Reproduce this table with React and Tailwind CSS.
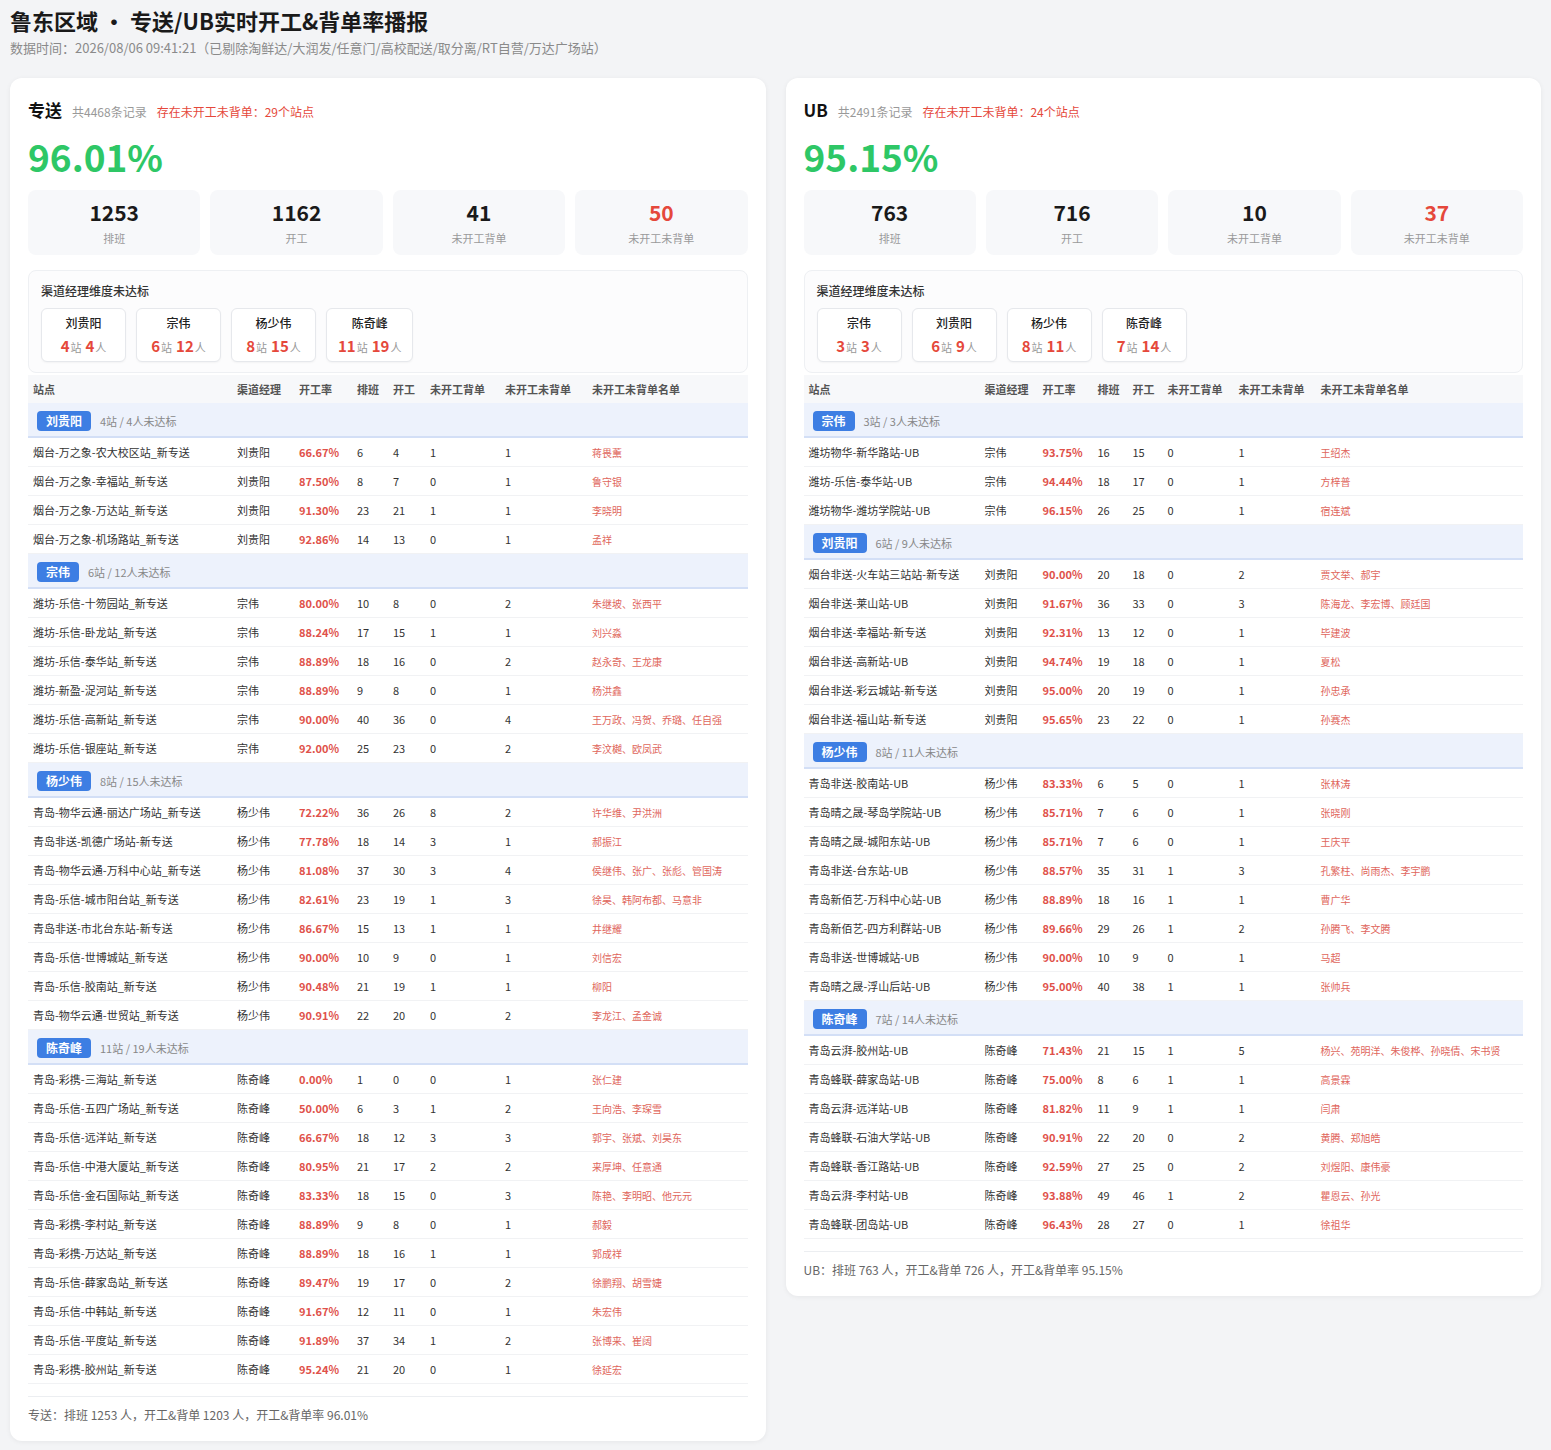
import React from 'react';

const FONT = { fontFamily: '"Noto Sans CJK SC", "Noto Sans", sans-serif' };

const zhuansong = {
  title: '专送',
  records: '共4468条记录',
  warn: '存在未开工未背单：29个站点',
  rate: '96.01%',
  stats: [
    ['1253', '排班'],
    ['1162', '开工'],
    ['41', '未开工背单'],
    ['50', '未开工未背单'],
  ],
  managers: [
    ['刘贵阳', 4, 4],
    ['宗伟', 6, 12],
    ['杨少伟', 8, 15],
    ['陈奇峰', 11, 19],
  ],
  cols: ['w-[204px]', 'w-[62px]', 'w-[58px]', 'w-[36px]', 'w-[37px]', 'w-[75px]', 'w-[87px]'],
  groups: [
    {
      name: '刘贵阳',
      note: '4站 / 4人未达标',
      rows: [
        ['烟台-万之象-农大校区站_新专送', '66.67%', 6, 4, 1, 1, '蒋畏薰'],
        ['烟台-万之象-幸福站_新专送', '87.50%', 8, 7, 0, 1, '鲁守银'],
        ['烟台-万之象-万达站_新专送', '91.30%', 23, 21, 1, 1, '李晓明'],
        ['烟台-万之象-机场路站_新专送', '92.86%', 14, 13, 0, 1, '孟祥'],
      ],
    },
    {
      name: '宗伟',
      note: '6站 / 12人未达标',
      rows: [
        ['潍坊-乐信-十笏园站_新专送', '80.00%', 10, 8, 0, 2, '朱继坡、张西平'],
        ['潍坊-乐信-卧龙站_新专送', '88.24%', 17, 15, 1, 1, '刘兴淼'],
        ['潍坊-乐信-泰华站_新专送', '88.89%', 18, 16, 0, 2, '赵永奇、王龙康'],
        ['潍坊-新盈-浞河站_新专送', '88.89%', 9, 8, 0, 1, '杨洪鑫'],
        ['潍坊-乐信-高新站_新专送', '90.00%', 40, 36, 0, 4, '王万政、冯贺、乔璐、任自强'],
        ['潍坊-乐信-银座站_新专送', '92.00%', 25, 23, 0, 2, '李汶樾、欧凤武'],
      ],
    },
    {
      name: '杨少伟',
      note: '8站 / 15人未达标',
      rows: [
        ['青岛-物华云通-丽达广场站_新专送', '72.22%', 36, 26, 8, 2, '许华维、尹洪洲'],
        ['青岛非送-凯德广场站-新专送', '77.78%', 18, 14, 3, 1, '郝振江'],
        ['青岛-物华云通-万科中心站_新专送', '81.08%', 37, 30, 3, 4, '侯继伟、张广、张彪、管国涛'],
        ['青岛-乐信-城市阳台站_新专送', '82.61%', 23, 19, 1, 3, '徐昊、韩阿布都、马意非'],
        ['青岛非送-市北台东站-新专送', '86.67%', 15, 13, 1, 1, '井继耀'],
        ['青岛-乐信-世博城站_新专送', '90.00%', 10, 9, 0, 1, '刘信宏'],
        ['青岛-乐信-胶南站_新专送', '90.48%', 21, 19, 1, 1, '柳阳'],
        ['青岛-物华云通-世贸站_新专送', '90.91%', 22, 20, 0, 2, '李龙江、孟金诚'],
      ],
    },
    {
      name: '陈奇峰',
      note: '11站 / 19人未达标',
      rows: [
        ['青岛-彩携-三海站_新专送', '0.00%', 1, 0, 0, 1, '张仁建'],
        ['青岛-乐信-五四广场站_新专送', '50.00%', 6, 3, 1, 2, '王向浩、李琛雪'],
        ['青岛-乐信-远洋站_新专送', '66.67%', 18, 12, 3, 3, '郭宇、张斌、刘昊东'],
        ['青岛-乐信-中港大厦站_新专送', '80.95%', 21, 17, 2, 2, '来厚坤、任意通'],
        ['青岛-乐信-金石国际站_新专送', '83.33%', 18, 15, 0, 3, '陈艳、李明昭、他元元'],
        ['青岛-彩携-李村站_新专送', '88.89%', 9, 8, 0, 1, '郝毅'],
        ['青岛-彩携-万达站_新专送', '88.89%', 18, 16, 1, 1, '郭成祥'],
        ['青岛-乐信-薛家岛站_新专送', '89.47%', 19, 17, 0, 2, '徐鹏翔、胡雪婕'],
        ['青岛-乐信-中韩站_新专送', '91.67%', 12, 11, 0, 1, '朱宏伟'],
        ['青岛-乐信-平度站_新专送', '91.89%', 37, 34, 1, 2, '张博来、崔阔'],
        ['青岛-彩携-胶州站_新专送', '95.24%', 21, 20, 0, 1, '徐延宏'],
      ],
    },
  ],
  footer: '专送：排班 1253 人，开工&背单 1203 人，开工&背单率 96.01%',
};

const ub = {
  title: 'UB',
  records: '共2491条记录',
  warn: '存在未开工未背单：24个站点',
  rate: '95.15%',
  stats: [
    ['763', '排班'],
    ['716', '开工'],
    ['10', '未开工背单'],
    ['37', '未开工未背单'],
  ],
  managers: [
    ['宗伟', 3, 3],
    ['刘贵阳', 6, 9],
    ['杨少伟', 8, 11],
    ['陈奇峰', 7, 14],
  ],
  cols: ['w-[176px]', 'w-[58px]', 'w-[55px]', 'w-[35px]', 'w-[35px]', 'w-[71px]', 'w-[82px]'],
  groups: [
    {
      name: '宗伟',
      note: '3站 / 3人未达标',
      rows: [
        ['潍坊物华-新华路站-UB', '93.75%', 16, 15, 0, 1, '王绍杰'],
        ['潍坊-乐信-泰华站-UB', '94.44%', 18, 17, 0, 1, '方梓普'],
        ['潍坊物华-潍坊学院站-UB', '96.15%', 26, 25, 0, 1, '宿连斌'],
      ],
    },
    {
      name: '刘贵阳',
      note: '6站 / 9人未达标',
      rows: [
        ['烟台非送-火车站三站站-新专送', '90.00%', 20, 18, 0, 2, '贾文举、郝宇'],
        ['烟台非送-莱山站-UB', '91.67%', 36, 33, 0, 3, '陈海龙、李宏博、顾廷国'],
        ['烟台非送-幸福站-新专送', '92.31%', 13, 12, 0, 1, '毕建波'],
        ['烟台非送-高新站-UB', '94.74%', 19, 18, 0, 1, '夏松'],
        ['烟台非送-彩云城站-新专送', '95.00%', 20, 19, 0, 1, '孙忠承'],
        ['烟台非送-福山站-新专送', '95.65%', 23, 22, 0, 1, '孙赛杰'],
      ],
    },
    {
      name: '杨少伟',
      note: '8站 / 11人未达标',
      rows: [
        ['青岛非送-胶南站-UB', '83.33%', 6, 5, 0, 1, '张林涛'],
        ['青岛晴之晟-琴岛学院站-UB', '85.71%', 7, 6, 0, 1, '张晓刚'],
        ['青岛晴之晟-城阳东站-UB', '85.71%', 7, 6, 0, 1, '王庆平'],
        ['青岛非送-台东站-UB', '88.57%', 35, 31, 1, 3, '孔繁柱、尚雨杰、李宇鹏'],
        ['青岛新佰艺-万科中心站-UB', '88.89%', 18, 16, 1, 1, '曹广华'],
        ['青岛新佰艺-四方利群站-UB', '89.66%', 29, 26, 1, 2, '孙腾飞、李文腾'],
        ['青岛非送-世博城站-UB', '90.00%', 10, 9, 0, 1, '马超'],
        ['青岛晴之晟-浮山后站-UB', '95.00%', 40, 38, 1, 1, '张帅兵'],
      ],
    },
    {
      name: '陈奇峰',
      note: '7站 / 14人未达标',
      rows: [
        ['青岛云湃-胶州站-UB', '71.43%', 21, 15, 1, 5, '杨兴、苑明洋、朱俊桦、孙晓倩、宋书贤'],
        ['青岛蜂联-薛家岛站-UB', '75.00%', 8, 6, 1, 1, '高景霖'],
        ['青岛云湃-远洋站-UB', '81.82%', 11, 9, 1, 1, '闫肃'],
        ['青岛蜂联-石油大学站-UB', '90.91%', 22, 20, 0, 2, '黄腾、郑旭皓'],
        ['青岛蜂联-香江路站-UB', '92.59%', 27, 25, 0, 2, '刘煜阳、康伟豪'],
        ['青岛云湃-李村站-UB', '93.88%', 49, 46, 1, 2, '瞿恩云、孙光'],
        ['青岛蜂联-团岛站-UB', '96.43%', 28, 27, 0, 1, '徐祖华'],
      ],
    },
  ],
  footer: 'UB：排班 763 人，开工&背单 726 人，开工&背单率 95.15%',
};

const HEADERS = ['站点', '渠道经理', '开工率', '排班', '开工', '未开工背单', '未开工未背单', '未开工未背单名单'];

function StatBox({ value, label, danger }) {
  return (
    <div className="flex-1 h-[65px] rounded-lg bg-[#f7f8fa] flex flex-col items-center justify-center">
      <div className={`text-[21px] leading-[26px] font-bold ${danger ? 'text-[#e5483b]' : 'text-[#1a1a1a]'}`}>{value}</div>
      <div className="text-[11px] leading-[16px] mt-[5px] text-[#9a9a9a]">{label}</div>
    </div>
  );
}

function ManagerChip({ name, stations, people }) {
  return (
    <div className="min-w-[85px] h-[54px] px-[11px] rounded-md border border-[#e6e8ec] bg-white shadow-[0_1px_2px_rgba(0,0,0,0.04)] flex flex-col items-center justify-center">
      <div className="text-[12px] leading-[16px] font-medium text-[#222]">{name}</div>
      <div className="mt-[5px] leading-[18px] whitespace-nowrap">
        <span className="text-[15px] font-bold text-[#e5483b]">{stations}</span>
        <span className="text-[11px] text-[#999] ml-[1px]">站</span>
        <span className="text-[15px] font-bold text-[#e5483b] ml-[4px]">{people}</span>
        <span className="text-[11px] text-[#999] ml-[1px]">人</span>
      </div>
    </div>
  );
}

// every data cell carries the row divider (separate border model)
const cell = 'h-[29px] px-[5px] border-b border-[#f1f2f4]';

function Panel({ data }) {
  return (
    <div className="bg-white rounded-xl shadow-[0_1px_5px_rgba(0,0,0,0.06)] px-[18px] pt-[18px] pb-[18px]">
      {/* heading */}
      <div className="flex items-baseline h-[28px] leading-[28px]">
        <span className="text-[17px] font-bold text-[#111]">{data.title}</span>
        <span className="ml-[10px] text-[12px] text-[#999]">{data.records}</span>
        <span className="ml-[10px] text-[12px] text-[#e5483b]">{data.warn}</span>
      </div>
      <div className="mt-[12px] text-[37px] leading-[40px] font-bold text-[#2ec766]">{data.rate}</div>

      {/* stats */}
      <div className="mt-[14px] flex gap-[10px]">
        {data.stats.map(([v, l], i) => (
          <StatBox key={l} value={v} label={l} danger={i === 3} />
        ))}
      </div>

      {/* manager summary */}
      <div className="mt-[15px] rounded-lg border border-[#eef0f3] bg-[#fcfcfd] px-3 pt-[12px] pb-[10px]">
        <div className="text-[12px] leading-[16px] font-medium text-[#333]">渠道经理维度未达标</div>
        <div className="mt-[9px] flex gap-[10px]">
          {data.managers.map(([n, s, p]) => (
            <ManagerChip key={n} name={n} stations={s} people={p} />
          ))}
        </div>
      </div>

      {/* table */}
      <table className="mt-[2px] w-full table-fixed border-separate border-spacing-0 text-[11px] text-[#333]">
        <colgroup>
          {data.cols.map((c, i) => (
            <col key={i} className={c} />
          ))}
          <col />
        </colgroup>
        <thead>
          <tr className="bg-[#f7f8fa]">
            {HEADERS.map((h) => (
              <th key={h} className="h-[28px] px-[5px] text-left font-semibold text-[#555] whitespace-nowrap">{h}</th>
            ))}
          </tr>
        </thead>
        <tbody>
          {data.groups.map((g) => (
            <React.Fragment key={g.name}>
              <tr className="bg-[#edf2fc]">
                <td colSpan={8} className="pl-[9px] pt-[8px] pb-[5px] border-b-2 border-[#d3dff6]">
                  <div className="flex items-center h-[20px]">
                    <span className="h-[20px] leading-[20px] px-[9px] rounded bg-[#3d7ee3] text-white text-[12px] font-bold">{g.name}</span>
                    <span className="ml-[9px] text-[11px] text-[#888]">{g.note}</span>
                  </div>
                </td>
              </tr>
              {g.rows.map((r) => (
                <tr key={r[0]}>
                  <td className={`${cell} whitespace-nowrap overflow-hidden`}>{r[0]}</td>
                  <td className={`${cell} whitespace-nowrap`}>{g.name}</td>
                  <td className={`${cell} font-semibold text-[#e0514a]`}>{r[1]}</td>
                  <td className={cell}>{r[2]}</td>
                  <td className={cell}>{r[3]}</td>
                  <td className={cell}>{r[4]}</td>
                  <td className={cell}>{r[5]}</td>
                  <td className={`${cell} text-[10px] text-[#e0665c] whitespace-nowrap overflow-hidden`}>{r[6]}</td>
                </tr>
              ))}
            </React.Fragment>
          ))}
        </tbody>
      </table>

      <div className="mt-[12px] border-t border-[#eceef1] pt-[10px] text-[12px] leading-[16px] text-[#666]">{data.footer}</div>
    </div>
  );
}

export default function App() {
  return (
    <div className="min-h-screen bg-[#f3f4f6] px-[10px] pt-[6px] pb-[10px]" style={FONT}>
      <h1 className="text-[22px] leading-[28px] font-bold text-[#1a1a1a]">鲁东区域 · 专送/UB实时开工&amp;背单率播报</h1>
      <p className="mt-[5px] text-[13px] leading-[18px] text-[#8a8a8a]">
        数据时间：2026/08/06 09:41:21（已剔除淘鲜达/大润发/任意门/高校配送/取分离/RT自营/万达广场站）
      </p>
      <div className="mt-[21px] grid grid-cols-2 gap-5 items-start">
        <Panel data={zhuansong} />
        <Panel data={ub} />
      </div>
    </div>
  );
}
